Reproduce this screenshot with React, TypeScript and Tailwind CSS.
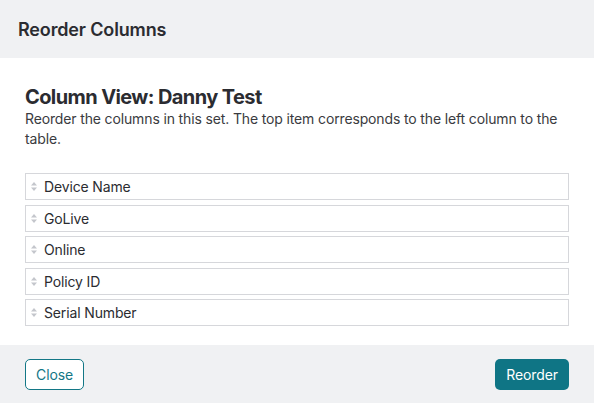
import { useState } from "react";

const initialColumns = ["Device Name", "GoLive", "Online", "Policy ID", "Serial Number"];

function SortHandle() {
  return (
    <svg width="6" height="9" viewBox="0 0 6 9" className="shrink-0">
      <path d="M3 0 L6 3.5 H0 Z" fill="#c4c6cc" />
      <path d="M3 9 L6 5.5 H0 Z" fill="#c4c6cc" />
    </svg>
  );
}

export default function App() {
  const [columns] = useState(initialColumns);

  return (
    <div
      className="flex h-[403px] w-[594px] flex-col bg-white text-[#2b2c31]"
      style={{ fontFamily: "Inter, 'Noto Sans', sans-serif" }}
    >
      {/* Header */}
      <div className="flex h-[58px] shrink-0 items-center bg-[#f0f1f3] px-[18px]">
        <h2 className="text-[18px] font-semibold tracking-[-0.15px]">Reorder Columns</h2>
      </div>

      {/* Body */}
      <div className="flex-1 px-[25px] pt-[27px]">
        <h1 className="text-[20px] font-bold leading-[24px] tracking-[-0.6px]">
          Column View: Danny Test
        </h1>
        <p className="text-[14px] leading-[19.5px] tracking-[-0.14px] text-[#3a3b40]">
          Reorder the columns in this set. The top item corresponds to the left column to the
          table.
        </p>

        <div className="mt-[25px] flex flex-col gap-[4.5px]">
          {columns.map((col) => (
            <div
              key={col}
              className="flex h-[27px] items-center gap-[7px] border border-[#d6d7db] bg-white pl-[5px] text-[14px] tracking-[-0.14px] text-[#2b2c31]"
            >
              <SortHandle />
              <span>{col}</span>
            </div>
          ))}
        </div>
      </div>

      {/* Footer */}
      <div className="flex h-[58px] shrink-0 items-center justify-between bg-[#f0f1f3] px-[25px]">
        <button className="h-[31px] rounded-[5px] border border-[#137786] bg-white px-[10px] text-[14px] tracking-[-0.1px] text-[#137786]">
          Close
        </button>
        <button className="h-[31px] rounded-[5px] bg-[#0f7585] px-[11px] text-[14px] tracking-[-0.1px] text-white">
          Reorder
        </button>
      </div>
    </div>
  );
}
